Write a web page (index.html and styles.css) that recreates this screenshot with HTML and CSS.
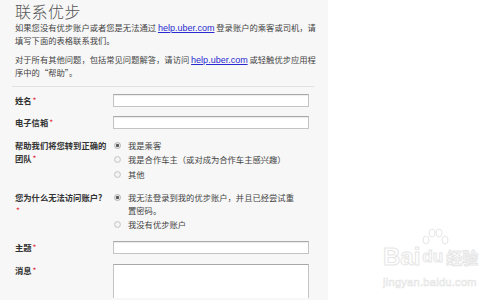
FILE: index.html
```html
<!DOCTYPE html>
<html lang="zh-CN">

<head>
  <meta charset="UTF-8">
  <meta name="viewport" content="width=device-width, initial-scale=1.0">
  <title>联系优步</title>
  <link rel="stylesheet" href="styles.css">
</head>

<body>
  <div class="panel">
    <h1 class="title">联系优步</h1>
    <p class="intro intro-first">如果您没有优步账户或者您是无法通过 <a href="#">help.uber.com</a> 登录账户的乘客或司机，请填写下面的表格联系我们。</p>
    <p class="intro intro-second">对于所有其他问题，包括常见问题解答，请访问 <a href="#">help.uber.com</a> 或轻触优步应用程序中的“帮助”。</p>
    <div class="divider"></div>

    <form class="form">
      <div class="row row-field">
        <label class="label">姓名<span class="req">*</span></label>
        <input class="text" type="text">
      </div>
      <div class="row row-field">
        <label class="label">电子信箱<span class="req">*</span></label>
        <input class="text" type="text">
      </div>
      <div class="row row-choice">
        <label class="label">帮助我们将您转到正确的团队<span class="req">*</span></label>
        <div class="options">
          <label class="option"><input class="radio" type="radio" name="team" checked><span>我是乘客</span></label>
          <label class="option"><input class="radio" type="radio" name="team"><span>我是合作车主（或对成为合作车主感兴趣）</span></label>
          <label class="option"><input class="radio" type="radio" name="team"><span>其他</span></label>
        </div>
      </div>
      <div class="row row-choice">
        <label class="label">您为什么无法访问账户?<br><span class="req">*</span></label>
        <div class="options">
          <label class="option"><input class="radio" type="radio" name="why" checked><span>我无法登录到我的优步账户，并且已经尝试重置密码。</span></label>
          <label class="option"><input class="radio" type="radio" name="why"><span>我没有优步账户</span></label>
        </div>
      </div>
      <div class="row row-field">
        <label class="label">主题<span class="req">*</span></label>
        <input class="text" type="text">
      </div>
      <div class="row row-area">
        <label class="label">消息<span class="req">*</span></label>
        <textarea class="area"></textarea>
      </div>
    </form>
  </div>

  <!-- 水印 -->
  <div class="mark">
    <div class="mark-logo">
      <span class="mark-bai">Bai</span>
      <span class="mark-du">
        <svg class="paw" width="30" height="20" viewBox="0 0 30 20">
          <ellipse cx="6" cy="12" rx="3" ry="4" />
          <ellipse cx="12" cy="5" rx="3" ry="4" />
          <ellipse cx="19" cy="5" rx="3" ry="4" />
          <ellipse cx="25" cy="12" rx="3" ry="4" />
        </svg>
        du
      </span>
      <span class="mark-cn">经验</span>
    </div>
    <div class="mark-url">jingyan.baidu.com</div>
  </div>
</body>

</html>
```

FILE: styles.css
```css
* {
  margin: 0;
  padding: 0;
  box-sizing: border-box;
}

html,
body {
  height: 100%;
  background: #fff;
  overflow: hidden;
}

body {
  font-family: "Noto Sans CJK SC", "Liberation Sans", sans-serif;
  color: #444;
  position: relative;
}

.panel {
  width: 328px;
  height: 100%;
  background: #f7f7f7;
  padding: 0 10px 0 15px;
}

.title {
  font-size: 16px;
  line-height: 22px;
  font-weight: 300;
  color: #555;
  letter-spacing: 0.5px;
}

.intro {
  font-size: 8.3px;
  line-height: 11.5px;
  color: #444;
  width: 302px;
}

.intro-first {
  margin-top: 0;
}

.intro-second {
  margin-top: 8px;
}

.intro a {
  font-family: "Liberation Sans", sans-serif;
  font-size: 9px;
  color: #2a2ad0;
  text-decoration: underline;
}

.divider {
  margin: 7.5px 0 0 -3px;
  width: 302px;
  height: 1px;
  background: #e2e2e2;
}

.form {
  display: flex;
  flex-direction: column;
  gap: 10px;
  padding-top: 7px;
}

.row {
  display: grid;
  grid-template-columns: 98px 196px;
}

.row-field {
  align-items: center;
}

.row-field + .row-field {
  margin-top: -1px;
}

.label {
  font-size: 8.3px;
  line-height: 13px;
  font-weight: bold;
  color: #333;
  padding-right: 6px;
}

.req {
  color: #e2323c;
  font-weight: normal;
  margin-left: 1px;
}

.text {
  height: 13px;
  width: 196px;
  background: #fff;
  border: 1px solid #c4c4c4;
  border-top-color: #a8a8a8;
  box-shadow: inset 0 1px 1px rgba(0, 0, 0, 0.08);
}

.area {
  height: 34px;
  width: 196px;
  background: #fff;
  border: 1px solid #c4c4c4;
  border-top-color: #a8a8a8;
  border-bottom: 0;
  resize: none;
}

.options {
  display: flex;
  flex-direction: column;
  gap: 1.5px;
}

.option {
  display: flex;
  align-items: flex-start;
  font-size: 8.3px;
  line-height: 13px;
  color: #444;
}

.option span {
  max-width: 170px;
}

.radio {
  appearance: none;
  -webkit-appearance: none;
  width: 7px;
  height: 7px;
  margin: 3px 7px 0 1px;
  flex: none;
  border-radius: 50%;
  border: 1px solid #c8c8c8;
  background: radial-gradient(circle, #fafafa 0, #e4e4e4 100%);
}

.radio:checked {
  border-color: #b0b0b0;
  background: radial-gradient(circle, #555 0, #555 1.3px, #eee 1.8px, #ddd 100%);
}

/* 右下角水印 */
.mark {
  position: absolute;
  left: 383px;
  top: 232px;
  color: #fff;
  font-family: "Liberation Sans", sans-serif;
}

.mark-logo {
  display: flex;
  align-items: flex-end;
  height: 38px;
}

.mark-bai,
.mark-du,
.mark-cn {
  font-size: 24px;
  line-height: 26px;
  font-weight: bold;
  -webkit-text-stroke: 1px #e6e6e6;
}

.mark-du {
  position: relative;
  font-size: 17px;
  margin-left: 2px;
}

.paw {
  position: absolute;
  left: -2px;
  top: -16px;
  fill: #fff;
  stroke: #e6e6e6;
  stroke-width: 1;
}

.mark-cn {
  font-family: "Noto Sans CJK SC", sans-serif;
  font-size: 16px;
  margin-left: 3px;
}

.mark-url {
  margin-top: 6px;
  font-size: 11px;
  letter-spacing: 0.3px;
  -webkit-text-stroke: 0.6px #e4e4e4;
}
```
